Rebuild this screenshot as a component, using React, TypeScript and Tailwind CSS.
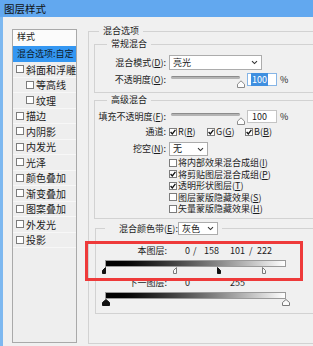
import React from 'react';

// Photoshop "图层样式" dialog, cropped
const U = ({ c }: { c: string }) => <span className="underline underline-offset-[1px]">{c}</span>;

function Check({ on }: { on?: boolean }) {
  return (
    <span className="flex h-[8px] w-[8px] shrink-0 items-center justify-center border border-[#7c7c7c] bg-white">
      {on && (
        <svg width="6" height="6" viewBox="0 0 6 6">
          <path d="M0.6 3 L2.3 4.9 L5.4 0.8" fill="none" stroke="#111" strokeWidth="1.3" />
        </svg>
      )}
    </span>
  );
}

function Chevron() {
  return (
    <svg width="7" height="5" viewBox="0 0 7 5">
      <path d="M1 1.2 L3.5 3.6 L6 1.2" fill="none" stroke="#333" strokeWidth="1.1" />
    </svg>
  );
}

function Select({ value, className }: { value: string; className: string }) {
  return (
    <div className={`flex items-center justify-between border border-[#acacac] bg-white pl-[3px] pr-[3px] ${className}`}>
      <span>{value}</span>
      <Chevron />
    </div>
  );
}

function Slider() {
  return (
    <div className="relative h-[13px] w-[74px]">
      <div className="mt-[5px] h-[3px] w-[69px] rounded-full border-t border-[#8c8c8c] bg-[#b4b4b4]" />
      <svg className="absolute left-[66px] top-[4px]" width="8" height="8" viewBox="0 0 8 8">
        <path d="M0.5 7.5 V4.2 L4 0.8 L7.5 4.2 V7.5 Z" fill="#fdfdfd" stroke="#8a8a8a" />
      </svg>
    </div>
  );
}

function PercentInput({ focused }: { focused?: boolean }) {
  return (
    <div className="flex items-center">
      <div
        className={`ml-[2px] flex h-[13px] w-[30px] items-center border bg-white pl-[3px] ${
          focused ? 'border-[#86b5e6]' : 'border-[#c4c4c4]'
        }`}
      >
        <span className={focused ? 'bg-[#3f8fe0] px-[1px] text-white' : 'px-[1px]'}>100</span>
      </div>
      <span className="ml-[3px]">%</span>
    </div>
  );
}

// marker shapes under the blend-if bars
function Marker({ kind, x, dark }: { kind: 'full' | 'left' | 'right'; x: number; dark: boolean }) {
  const fill = dark ? '#111' : '#fafafa';
  const stroke = dark ? '#111' : '#7a7a7a';
  if (kind === 'full') {
    return (
      <svg className="absolute top-0" style={{ left: x - 4 }} width="8" height="7" viewBox="0 0 8 7">
        <path d="M0.5 6.5 V3.5 L4 0.5 L7.5 3.5 V6.5 Z" fill={fill} stroke={stroke} />
      </svg>
    );
  }
  if (kind === 'left') {
    return (
      <svg className="absolute top-0" style={{ left: x - 4 }} width="4" height="7" viewBox="0 0 4 7">
        <path d="M3.5 0.5 V6.5 H0.5 V3.5 Z" fill={fill} stroke={stroke} />
      </svg>
    );
  }
  return (
    <svg className="absolute top-0" style={{ left: x }} width="4" height="7" viewBox="0 0 4 7">
      <path d="M0.5 0.5 V6.5 H3.5 V3.5 Z" fill={fill} stroke={stroke} />
    </svg>
  );
}

const styleItems: { t: string; sub?: boolean }[] = [
  { t: '斜面和浮雕' },
  { t: '等高线', sub: true },
  { t: '纹理', sub: true },
  { t: '描边' },
  { t: '内阴影' },
  { t: '内发光' },
  { t: '光泽' },
  { t: '颜色叠加' },
  { t: '渐变叠加' },
  { t: '图案叠加' },
  { t: '外发光' },
  { t: '投影' },
];

export default function App() {
  return (
    <div className="relative h-[346px] w-[313px] overflow-hidden bg-[#f0f0f0] font-['Noto_Sans_CJK_SC','Liberation_Sans',sans-serif] text-[9px] text-[#1c1c1c]">
      {/* title bar */}
      <div className="h-[17px] bg-[#62a8ef] pl-[4px] text-[10.5px] leading-[17px] text-[#111]">图层样式</div>

      <div className="flex h-[329px] border-l-[3px] border-[#7db8f0]">
        {/* left: style list */}
        <div className="ml-[9px] mt-[12px] flex h-[314px] w-[65px] shrink-0 flex-col overflow-hidden border border-[#a9a9a9] bg-[#eeeeee]">
          <div className="h-[16px] bg-[#fbfbfb] pl-[4px] leading-[14px]">样式</div>
          <div className="h-[16px] bg-[#3497f2] pl-[4px] leading-[16px] text-[#0d1a2a] whitespace-nowrap">混合选项:自定</div>
          {styleItems.map((it) => (
            <div
              key={it.t}
              className={`flex h-[15.5px] items-center gap-[2px] border-b border-[#f7f7f7] text-[10px] whitespace-nowrap ${
                it.sub ? 'pl-[13px]' : 'pl-[3px]'
              }`}
            >
              <Check />
              <span>{it.t}</span>
            </div>
          ))}
        </div>

        {/* right: blending options */}
        <fieldset className="ml-[11px] mt-[8px] h-[319px] w-[252px] shrink-0 border border-[#d2d2d2]">
          <legend className="ml-[10px] px-[4px] leading-[12px]">混合选项</legend>

          <fieldset className="ml-[5px] mt-[1px] w-[240px] border border-[#d2d2d2] pb-[6px]">
            <legend className="ml-[12px] px-[4px] leading-[12px]">常规混合</legend>
            <div className="mt-[5px] flex h-[15px] items-center">
              <span className="w-[71px] text-right">
                混合模式(<U c="D" />):
              </span>
              <Select value="亮光" className="ml-[3px] h-[15px] w-[93px]" />
            </div>
            <div className="mt-[3px] flex h-[13px] items-center">
              <span className="w-[71px] text-right">
                不透明度(<U c="O" />):
              </span>
              <div className="ml-[5px]">
                <Slider />
              </div>
              <PercentInput focused />
            </div>
          </fieldset>

          <fieldset className="ml-[5px] mt-[1px] w-[240px] border border-[#d2d2d2] pb-[3px]">
            <legend className="ml-[12px] px-[4px] leading-[12px]">高级混合</legend>
            <div className="mt-[4px] flex h-[13px] items-center">
              <span className="w-[71px] whitespace-nowrap text-right">
                填充不透明度(<U c="F" />):
              </span>
              <div className="ml-[5px]">
                <Slider />
              </div>
              <PercentInput />
            </div>
            <div className="mt-[3px] flex h-[12px] items-center">
              <span className="w-[71px] text-right">通道:</span>
              {[
                ['R', 'R'],
                ['G', 'G'],
                ['B', 'B'],
              ].map(([a, b], i) => (
                <div key={a} className={`flex w-[38px] items-center gap-[1px] ${i === 0 ? 'ml-[3px]' : ''}`}>
                  <Check on />
                  <span>
                    {a}(<U c={b} />)
                  </span>
                </div>
              ))}
            </div>
            <div className="mt-[4px] flex h-[14px] items-center">
              <span className="w-[71px] text-right">
                挖空(<U c="N" />):
              </span>
              <Select value="无" className="ml-[3px] h-[14px] w-[39px]" />
            </div>
            <div className="mt-[1px] flex flex-col pl-[74px]">
              {[
                ['将内部效果混合成组', 'I', false],
                ['将剪贴图层混合成组', 'P', true],
                ['透明形状图层', 'T', true],
                ['图层蒙版隐藏效果', 'S', false],
                ['矢量蒙版隐藏效果', 'H', false],
              ].map(([t, k, on]) => (
                <div key={t as string} className="flex h-[11.5px] items-center gap-[1px] whitespace-nowrap">
                  <Check on={on as boolean} />
                  <span>
                    {t as string}(<U c={k as string} />)
                  </span>
                </div>
              ))}
            </div>
          </fieldset>

          <fieldset className="ml-[6px] mt-[3px] h-[92px] w-[240px] border border-[#d2d2d2]">
            <legend className="ml-[9px] flex items-center pl-[14px] pr-[4px]">
              <span className="w-[50px] whitespace-nowrap">
                混合颜色带(<U c="E" />):
              </span>
              <Select value="灰色" className="ml-[9px] h-[13px] w-[40px]" />
            </legend>

            <div className="mt-[10px] flex h-[12px] items-center">
              <span className="w-[71px] text-right">本图层:</span>
              <span className="ml-[18px] w-[8px]">0</span>
              <span className="w-[11px]">/</span>
              <span className="w-[26px]">158</span>
              <span className="w-[19px]">101</span>
              <span className="w-[8px]">/</span>
              <span>222</span>
            </div>
            <div className="ml-[9px] mt-[3px] h-[7px] w-[181px] border border-[#9a9a9a] bg-gradient-to-r from-black to-white" />
            <div className="relative ml-[9px] h-[7px] w-[181px]">
              <Marker kind="left" x={1} dark />
              <Marker kind="left" x={72} dark={false} />
              <Marker kind="right" x={112} dark />
              <Marker kind="right" x={157} dark={false} />
            </div>

            <div className="mt-[3px] flex h-[12px] items-center">
              <span className="w-[71px] text-right">下一图层:</span>
              <span className="ml-[18px] w-[45px]">0</span>
              <span>255</span>
            </div>
            <div className="ml-[9px] mt-[3px] h-[7px] w-[181px] border border-[#9a9a9a] bg-gradient-to-r from-black to-white" />
            <div className="relative ml-[9px] h-[7px] w-[181px]">
              <Marker kind="full" x={1} dark />
              <Marker kind="full" x={181} dark={false} />
            </div>
          </fieldset>
        </fieldset>
      </div>

      {/* red annotation box */}
      <div className="pointer-events-none absolute left-[85px] top-[241px] h-[40px] w-[218px] border-[3px] border-[#ee3a3a]" />
    </div>
  );
}
